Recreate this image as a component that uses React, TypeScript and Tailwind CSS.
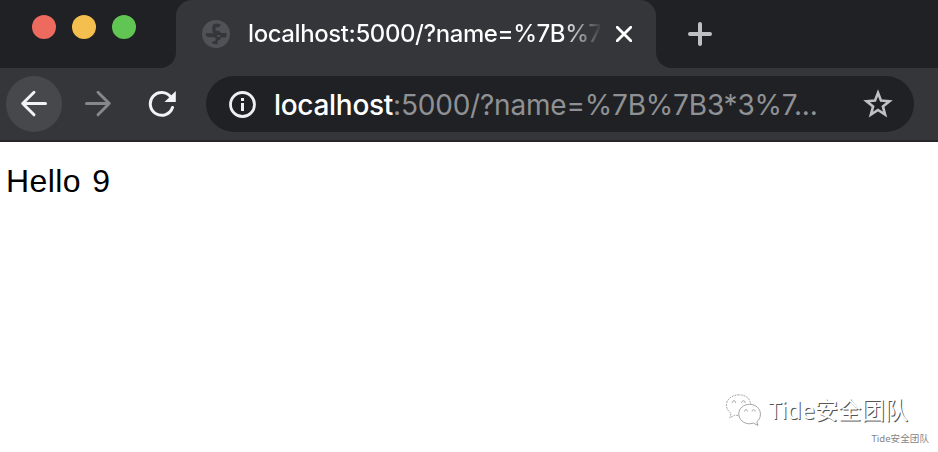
function Globe() {
  return (
    <svg className="block size-7" viewBox="0 0 28 28">
      <circle cx="14" cy="14" r="14" fill="#505257" />
      <path d="M3.5 13.3H11c2.8 0 4.4 1.2 4.4 3.4H19c0 2.4-1.1 3.7-3.4 3.7v3.8c-1.9.3-3.8 0-5.4-.7v-1.8c2.4-.1 3.6-.8 3.6-2.4 0-1.4-.9-2-2.7-2H7.7c-2.7 0-4-1.4-4.2-4Z" fill="#35363a" />
      <path d="M11.5 4.2c2.2-.8 4.9-.8 7.1 0 0 1.9-1.1 2.9-3.2 3.1-1.5.1-2 .8-2 1.8 0 1.3.9 2 2.6 2 1.5 0 2.3.6 2.7 1.8h5.7c.4 1.6.1 3.3-.6 4.7h-2.3c-2 0-3.4-.9-3.9-2.7h-2.2c-3.1 0-5.2-1.7-5.2-4.5 0-2.9.1-4.6 1.3-6.2Z" fill="#35363a" />
    </svg>
  );
}

function WeChat() {
  return (
    <svg className="block h-[35px] w-[38px]" viewBox="0 0 40 36" fill="#fff" stroke="#777" strokeWidth=".7">
      <path d="M15 1.5C7 1.5 1.5 6.2 1.5 12.5c0 3.6 2 6.6 5 8.5l-1.5 4.7 5.5-2.9 4 .7C22 23.5 27 19 27 12.5S22.5 1.5 15 1.5Z" strokeDasharray="2 1" />
      <path d="M26 11.5c-6.5 0-11.5 4.3-11.5 10S19.4 32 26 32l4-.7 4.7 2.4-1.2-3.9c2.4-1.8 3.8-4.5 3.8-7.8 0-6-4.8-10.5-11.3-10.5Z" />
      <path d="M7.5 10c.4-3 3.4-3 3.8 0M17.5 10c.4-3 3.4-3 3.8 0M20.5 19c.3-2.5 2.9-2.5 3.2 0M28.5 19c.3-2.5 2.9-2.5 3.2 0" fill="none" />
    </svg>
  );
}

export default function App() {
  return (
    <div className="flex h-[452px] w-[938px] flex-col overflow-hidden bg-white">
      <header className="flex h-[68px] shrink-0 bg-[#202124]">
        <div className="flex w-44 items-start gap-4 pt-[15px] pl-8">
          <span className="size-6 rounded-full bg-[#ed6a5e]" />
          <span className="size-6 rounded-full bg-[#f5bf4f]" />
          <span className="size-6 rounded-full bg-[#61c554]" />
        </div>
        <div className="relative flex h-[68px] w-[480px] items-center rounded-t-2xl bg-[#35363a] pl-[26px]">
          <svg className="absolute bottom-0 -left-4 size-4" viewBox="0 0 16 16"><path d="M16 0v16H0C9 16 16 9 16 0Z" fill="#35363a" /></svg>
          <svg className="absolute -right-4 bottom-0 size-4" viewBox="0 0 16 16"><path d="M0 0v16h16C7 16 0 9 0 0Z" fill="#35363a" /></svg>
          <Globe />
          <div className="ml-[18px] w-[352px] bg-[linear-gradient(90deg,#fff_0,#fff_314px,#35363a_354px)] bg-clip-text font-['Inter',sans-serif] text-[24px] leading-8 font-medium tracking-[-0.42px] whitespace-nowrap text-transparent">
            localhost:5000/?name=%7B%7
          </div>
          <svg className="ml-4 block size-4" viewBox="0 0 16 16" fill="none" stroke="#fff" strokeWidth="2.8" strokeLinecap="round"><path d="m1.2 1.2 13.6 13.6M14.8 1.2 1.2 14.8" /></svg>
        </div>
        <div className="flex items-center pl-8">
          <svg className="block size-6" viewBox="0 0 24 24" fill="none" stroke="#bdc1c6" strokeWidth="4" strokeLinecap="round"><path d="M12 2v20M2 12h20" /></svg>
        </div>
      </header>
      <nav className="flex h-[74px] shrink-0 items-start border-b-2 border-[#29262b] bg-[#35363a] pt-2 pl-1.5">
        <div className="flex size-14 items-center justify-center rounded-full bg-[#47484c]">
          <svg className="block size-7" viewBox="0 0 28 28" fill="none" stroke="#f1f3f4" strokeWidth="3" strokeLinecap="round" strokeLinejoin="round"><path d="M25.5 13.5H3M14 2.3 2.7 13.5 14 24.8" /></svg>
        </div>
        <div className="flex h-14 w-[72px] items-center justify-center">
          <svg className="block size-7" viewBox="0 0 28 28" fill="none" stroke="#85878a" strokeWidth="3" strokeLinecap="round" strokeLinejoin="round"><path d="M2.5 13.5H25M14 2.3l11.3 11.2L14 24.8" /></svg>
        </div>
        <div className="flex h-14 w-[56px] items-center justify-center">
          <svg className="block size-7" viewBox="0 0 28 28"><path d="M22.8 7A11.4 11.4 0 1 0 24.5 17.5" fill="none" stroke="#f1f3f4" strokeWidth="3" strokeLinecap="round" /><path d="M27.8 1v11H16.5Z" fill="#f1f3f4" /></svg>
        </div>
        <div className="ml-4 flex h-14 w-[708px] items-center rounded-full bg-[#202124] pl-[23px]">
          <svg className="block size-7" viewBox="0 0 28 28" fill="none" stroke="#eeeff1" strokeWidth="2.8"><circle cx="13.5" cy="14.5" r="12" /><path d="M13.5 13v8M13.5 8v3" strokeWidth="3" /></svg>
          <div className="ml-[17px] w-[548px] pt-px font-['Inter',sans-serif] text-[28px] leading-8 whitespace-nowrap text-[#8f9194]">
            <span className="font-medium tracking-[-0.3px] text-white">localhost</span><span className="tracking-[-0.2px]">:5000/?name=%7B%7B3*3%7...</span>
          </div>
          <svg className="ml-[41px] block size-[30px]" viewBox="0 0 30 30" fill="none" stroke="#bfc1c5" strokeWidth="2.6"><path d="m15 3.8 3 7.8 8.4.6-6.5 5.2 2.2 8.2-7.1-4.6-7.1 4.6 2.2-8.2-6.5-5.2 8.4-.6Z" /></svg>
        </div>
      </nav>
      <main className="flex flex-1 flex-col justify-between">
        <p className="pt-[21px] pl-[6px] font-['Liberation_Sans',Arial,sans-serif] text-[32px] leading-9 tracking-[0.4px] text-black [word-spacing:2px]">Hello 9</p>
        <div className="flex flex-col items-end pr-[9px] pb-[6px] font-['Noto_Sans','Noto_Sans_CJK_SC',sans-serif]">
          <div className="mb-1 flex items-center gap-[5px] pr-[21px]">
            <WeChat />
            <span className="text-[23.3px] leading-9 whitespace-nowrap text-white [text-shadow:1px_1px_0_#555]">Tide安全团队</span>
          </div>
          <span className="text-[9.6px] leading-[14px] whitespace-nowrap text-[#858585]">Tide安全团队</span>
        </div>
      </main>
    </div>
  );
}
